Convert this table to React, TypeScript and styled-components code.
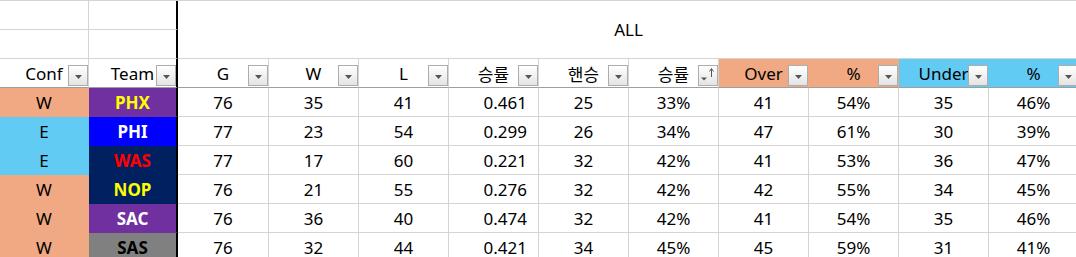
import { Fragment } from "react";
import styled, { createGlobalStyle } from "styled-components";

const GlobalStyle = createGlobalStyle`
  html, body {
    margin: 0;
    padding: 0;
    background: #fff;
    overflow: hidden;
  }
`;

const ORANGE = "#F1A983";
const BLUE = "#61CBF3";
const GRID = "#d4d4d4";
const FREEZE = "#9e9e9e";

const Sheet = styled.div`
  display: grid;
  grid-template-columns: 89px 89px 91px repeat(9, 90px);
  grid-auto-rows: 29px;
  border-top: 1px solid ${GRID};
  font-family: "Noto Sans", "Noto Sans CJK KR", sans-serif;
  font-size: 17px;
  color: #000;
`;

const Cell = styled.div<{
  $bg?: string;
  $color?: string;
  $bold?: boolean;
  $right?: boolean;
  $divider?: boolean;
  $header?: boolean;
}>`
  position: relative;
  box-sizing: border-box;
  display: flex;
  align-items: center;
  justify-content: ${(p) => (p.$right ? "flex-end" : "center")};
  padding-right: ${(p) => (p.$right ? "11px" : "0")};
  background: ${(p) => p.$bg ?? "#fff"};
  color: ${(p) => p.$color ?? "#000"};
  font-weight: ${(p) => (p.$bold ? 700 : 400)};
  border-right: ${(p) =>
    p.$divider ? "2px solid #000" : `1px solid ${p.$bg ?? GRID}`};
  border-bottom: 1px solid
    ${(p) => (p.$header ? FREEZE : p.$bg ?? GRID)};
  white-space: nowrap;
  overflow: hidden;
`;

const Banner = styled.div`
  grid-column: 3 / span 10;
  grid-row: 1 / span 2;
  box-sizing: border-box;
  display: flex;
  align-items: center;
  justify-content: center;
  border-bottom: 1px solid ${GRID};
`;

const FilterButton = styled.span`
  position: absolute;
  right: 0;
  bottom: 1px;
  width: 20px;
  height: 21px;
  box-sizing: border-box;
  border: 1px solid #adadad;
  background: linear-gradient(#ffffff, #e4e4e4);
  display: flex;
  align-items: center;
  justify-content: center;

  svg {
    display: block;
  }
`;

function Filter({ sorted }: { sorted?: boolean }) {
  return (
    <FilterButton>
      {sorted ? (
        <svg width="18" height="19" viewBox="0 0 18 19">
          <path d="M2 11.5h6L5 14.5z" fill="#555" />
          <path d="M12.5 3v8" stroke="#555" strokeWidth="1" />
          <path d="M10.5 5.5L12.5 2.5L14.5 5.5" stroke="#555" strokeWidth="1" fill="none" />
        </svg>
      ) : (
        <svg width="7" height="4" viewBox="0 0 7 4" style={{ marginTop: 3 }}>
          <path d="M0 0h7L3.5 4z" fill="#555" />
        </svg>
      )}
    </FilterButton>
  );
}

type Head = { label: string; bg?: string; sorted?: boolean };

const heads: Head[] = [
  { label: "G" },
  { label: "W" },
  { label: "L" },
  { label: "승률" },
  { label: "핸승" },
  { label: "승률", sorted: true },
  { label: "Over", bg: ORANGE },
  { label: "%", bg: ORANGE },
  { label: "Under", bg: BLUE },
  { label: "%", bg: BLUE },
];

type Row = {
  conf: "W" | "E";
  team: string;
  teamBg: string;
  teamColor: string;
  values: (string | number)[];
};

const rows: Row[] = [
  { conf: "W", team: "PHX", teamBg: "#7030A0", teamColor: "#FFFF00", values: [76, 35, 41, "0.461", 25, "33%", 41, "54%", 35, "46%"] },
  { conf: "E", team: "PHI", teamBg: "#0000FF", teamColor: "#FFFFFF", values: [77, 23, 54, "0.299", 26, "34%", 47, "61%", 30, "39%"] },
  { conf: "E", team: "WAS", teamBg: "#002060", teamColor: "#FF0000", values: [77, 17, 60, "0.221", 32, "42%", 41, "53%", 36, "47%"] },
  { conf: "W", team: "NOP", teamBg: "#002060", teamColor: "#FFFF00", values: [76, 21, 55, "0.276", 32, "42%", 42, "55%", 34, "45%"] },
  { conf: "W", team: "SAC", teamBg: "#7030A0", teamColor: "#FFFFFF", values: [76, 36, 40, "0.474", 32, "42%", 41, "54%", 35, "46%"] },
  { conf: "W", team: "SAS", teamBg: "#808080", teamColor: "#000000", values: [76, 32, 44, "0.421", 34, "45%", 45, "59%", 31, "41%"] },
];

export default function App() {
  return (
    <>
      <GlobalStyle />
      <Sheet>
        <Cell />
        <Cell $divider />
        <Banner>ALL</Banner>
        <Cell />
        <Cell $divider />

        <Cell $header>
          Conf
          <Filter />
        </Cell>
        <Cell $header $divider>
          Team
          <Filter />
        </Cell>
        {heads.map((h, i) => (
          <Cell key={i} $header $bg={h.bg}>
            {h.label}
            <Filter sorted={h.sorted} />
          </Cell>
        ))}

        {rows.map((r) => (
          <Fragment key={r.team}>
            <Cell $bg={r.conf === "W" ? ORANGE : BLUE}>{r.conf}</Cell>
            <Cell $bg={r.teamBg} $color={r.teamColor} $bold $divider>
              {r.team}
            </Cell>
            {r.values.map((v, i) => (
              <Cell key={i} $right={i === 3}>
                {v}
              </Cell>
            ))}
          </Fragment>
        ))}
      </Sheet>
    </>
  );
}
